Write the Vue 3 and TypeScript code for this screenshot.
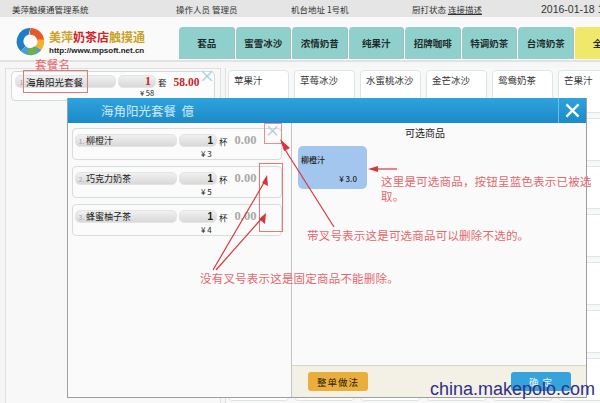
<script setup lang="ts">
const tabs: string[] = ['套品', '蜜雪冰沙', '浓情奶昔', '纯果汁', '招牌咖啡', '特调奶茶', '台湾奶茶', '全部']
const products: string[] = [
  '苹果汁', '草莓冰沙', '水蜜桃冰沙', '金芒冰沙', '鸳鸯奶茶', '芒果汁',
  '', '', '', '', '', '奶香',
  '', '', '', '', '', '奶昔',
  '', '', '', '', '', '果茶',
  '', '', '', '', '', '奶茶',
  '', '', '', '', '', '奶绿',
  '', '', '', '', '', '奶盖',
]
const items = [
  { no: 1, name: '柳橙汁', price: '¥ 3', removable: true },
  { no: 2, name: '巧克力奶茶', price: '¥ 5', removable: false },
  { no: 3, name: '蜂蜜柚子茶', price: '¥ 4', removable: false },
]
</script>

<template>
  <div class="page">
    <header class="status">
      <span class="s1">美萍触摸通管理系统</span>
      <span class="s2">操作人员 管理员</span>
      <span class="s3">机台地址 1号机</span>
      <span class="s4">厨打状态 <u>连接描述</u></span>
      <span class="s5">2016-01-18 16:30</span>
    </header>

    <div class="brand-row">
      <div class="brand">
        <svg class="logo" viewBox="0 0 30 30" width="29" height="29">
          <path d="M15 1 A14 14 0 0 0 5 25 L10 20 A7 7 0 0 1 13 8 Z" fill="#1f7fc4" />
          <path d="M15 1 A14 14 0 0 1 29 14 L22 14 A7 7 0 0 0 14 8 Z" fill="#e8562a" />
          <path d="M29 13 A14 14 0 0 1 25 25 L20 20 A7 7 0 0 0 22 13 Z" fill="#f2b32c" />
          <path d="M26 24 A14 14 0 0 1 5 25 L10 20 A7 7 0 0 0 20 20 Z" fill="#4a9fd0" />
          <path d="M22 26 A14 14 0 0 1 12 29 L13 22 A7 7 0 0 0 19 20 Z" fill="#6cb33f" />
        </svg>
        <div class="brand-text">
          <div class="brand-name"><span class="gold">美萍</span><span class="red">奶茶店</span><span class="gold">触摸通</span></div>
          <div class="brand-url">http://www.mpsoft.net.cn</div>
        </div>
      </div>
      <nav class="tabs">
        <div v-for="(t, i) in tabs" :key="t" class="tab" :class="{ active: i === tabs.length - 1 }">{{ t }}</div>
      </nav>
    </div>

    <main class="main">
      <section class="order">
        <div class="order-card">
          <div class="pill-row">
            <div class="pill name-pill"><i>1</i>海角阳光套餐</div>
            <div class="pill qty-pill"><b>1</b></div>
            <span class="unit">套</span>
            <b class="total">58.00</b>
          </div>
          <div class="order-price">¥ 58</div>
          <span class="close-x">×</span>
        </div>
      </section>
      <section class="products">
        <div v-for="(p, i) in products" :key="i" class="product">{{ p }}</div>
      </section>
    </main>

    <div class="modal">
      <div class="modal-head">
        <span class="modal-title">海角阳光套餐&nbsp;&nbsp;億</span>
        <button class="modal-close">
          <svg viewBox="0 0 16 16" width="15" height="15"><path d="M1.5 1.5 L14.5 14.5 M14.5 1.5 L1.5 14.5" stroke="#fff" stroke-width="2.4" /></svg>
        </button>
      </div>
      <div class="modal-body">
        <div class="left-pane">
          <div v-for="it in items" :key="it.no" class="item">
            <div class="pill-row">
              <div class="pill item-name"><i>{{ it.no }}.</i>{{ it.name }}</div>
              <div class="pill item-qty">1</div>
              <span class="unit">杯</span>
              <b class="zero">0.00</b>
            </div>
            <div class="item-price">{{ it.price }}</div>
            <span v-if="it.removable" class="item-x">×</span>
          </div>
        </div>
        <div class="right-pane">
          <div class="right-main">
            <h3 class="right-title">可选商品</h3>
            <div class="choice">
              <span class="choice-name">柳橙汁</span>
              <span class="choice-price">¥ 3.0</span>
            </div>
          </div>
          <footer class="foot">
            <button class="btn-amber">整单做法</button>
            <button class="btn-blue">确 定</button>
          </footer>
        </div>
      </div>
    </div>

    <!-- annotations laid over the screenshot -->
    <svg class="marks" width="600" height="403" viewBox="0 0 600 403">
      <rect x="23.5" y="70.5" width="64" height="22" fill="none" stroke="#e9777a" />
      <rect x="264.5" y="123.5" width="17" height="20" fill="none" stroke="#ee8b8e" />
      <rect x="259.5" y="163.5" width="23" height="68" fill="none" stroke="#e9777a" />
      <g stroke="#d8363c" stroke-width="1.2" fill="#d8363c">
        <path d="M334 227 L284 148" fill="none" />
        <path d="M280 139 L290 148 L284 151 Z" stroke="none" />
        <path d="M213 270 L265 181" fill="none" />
        <path d="M267 175 L268 186 L262 183 Z" stroke="none" />
        <path d="M216 270 L263 217" fill="none" />
        <path d="M266 213 L265 224 L259 219 Z" stroke="none" />
        <path d="M397 169 L374 169" fill="none" />
        <path d="M368 169 L378 166 L378 172 Z" stroke="none" />
      </g>
    </svg>
    <div class="note n0">套餐名</div>
    <div class="note n1">这里是可选商品，按钮呈蓝色表示已被选<br />取。</div>
    <div class="note n2">带叉号表示这是可选商品可以删除不选的。</div>
    <div class="note n3">没有叉号表示这是固定商品不能删除。</div>
    <div class="watermark">china.makepolo.com</div>
  </div>
</template>

<style>
html, body { margin: 0; background: #f5f5f5; }
</style>

<style scoped>
.page {
  position: relative;
  width: 600px;
  height: 403px;
  overflow: hidden;
  background: #f6f6f6;
  font-family: "Noto Sans CJK SC", "Liberation Sans", sans-serif;
  color: #222;
}
.status {
  display: grid;
  grid-template-columns: 164px 115px 121px 129px 1fr;
  align-items: center;
  height: 17px;
  padding-left: 12px;
  background: #e5e5e5;
  font-size: 8.5px;
  color: #333;
  white-space: nowrap;
}
.s5 { font-size: 10.5px; font-family: "Liberation Sans", sans-serif; }
.brand-row {
  display: flex;
  height: 43px;
  padding-left: 6px;
  background: #fafafa;
  border-bottom: 2px solid #e2e2e2;
}
.brand { flex: none; display: flex; width: 173px; padding: 10px 0 0 10px; box-sizing: border-box; gap: 4px; }
.logo { flex: none; }
.brand-text { display: flex; flex-direction: column; padding-top: 3px; }
.brand-name { font-size: 12px; line-height: 14px; font-weight: 700; white-space: nowrap; }
.gold { color: #c9a227; }
.red { color: #d1262a; }
.brand-url { font-family: "Liberation Sans", sans-serif; font-size: 8px; font-weight: 700; line-height: 12px; margin-top: 1px; color: #222; white-space: nowrap; }
.tabs { flex: none; display: flex; gap: 0.5px; padding-top: 10px; }
.tab {
  flex: none;
  width: 55.5px;
  height: 32px;
  margin-right: 0.5px;
  display: flex;
  align-items: center;
  justify-content: center;
  background: #8fd0cc;
  border-radius: 4px 4px 0 0;
  box-shadow: inset -1px 0 0 #a9bdbb;
  font-size: 9.5px;
  font-weight: 700;
  color: #1d2b2a;
}
.tab.active { background: #f0e86a; }
.main { display: flex; height: 343px; padding: 6px 0 0 5px; box-sizing: border-box; gap: 4px; }
.order { flex: none; width: 216px; padding: 2px 5px; box-sizing: border-box; border: 1px solid #e0e0e0; border-width: 1px 1px 0; background: #f8f8f8; }
.order-card {
  position: relative;
  height: 30px;
  padding: 3px 3px;
  box-sizing: border-box;
  border: 1px solid #cfdcdc;
  border-radius: 4px;
  background: #fcfcfc;
}
.pill-row { display: flex; align-items: center; gap: 2px; }
.pill {
  display: flex;
  align-items: center;
  box-sizing: border-box;
  height: 13px;
  border-radius: 5px;
  background: linear-gradient(#f0f0f0, #d9d9d9);
  border: 1px solid #e4e4e4;
  font-size: 9px;
  color: #222;
  white-space: nowrap;
}
.pill i { font-style: normal; font-size: 7px; color: #aaa; width: 9px; text-align: center; flex: none; }
.name-pill { width: 101px; padding-left: 1px; font-size: 9.5px; }
.qty-pill { width: 38px; justify-content: flex-end; padding-right: 4px; }
.qty-pill b { color: #c8242a; font-family: "Liberation Serif", serif; font-size: 12px; }
.unit { font-size: 8.5px; }
.total { font-family: "Liberation Serif", serif; color: #c8242a; font-size: 11.5px; margin-left: 5px; }
.order-price { font-size: 7.5px; line-height: 9px; margin: 0 0 0 125px; }
.close-x { position: absolute; right: -1px; top: -6px; font-size: 16px; line-height: 18px; color: #9ccbd8; }
.products {
  flex: none;
  width: 375px;
  display: grid;
  grid-template-columns: repeat(6, 61px);
  grid-auto-rows: 43px;
  gap: 5px;
  padding: 2px 0 0 2px;
  border-left: 1px solid #e0e0e0;
  background: #f8f8f8;
}
.product {
  background: #fff;
  border: 1px solid #dbe6e6;
  border-radius: 4px;
  padding: 2px 5px;
  font-size: 9.5px;
  color: #333;
  white-space: nowrap;
  overflow: hidden;
}
.modal {
  position: absolute;
  left: 67px;
  top: 98px;
  width: 520px;
  height: 300px;
  display: flex;
  flex-direction: column;
  box-sizing: border-box;
  background: #fafafa;
  border: 1px solid #9e9e9e;
  border-top: none;
}
.modal-head {
  flex: none;
  height: 25px;
  display: flex;
  align-items: stretch;
  justify-content: space-between;
  background: linear-gradient(#2ea3dc, #1c8ac8);
  color: #cfeaf8;
}
.modal-title { font-size: 12.5px; line-height: 26px; padding-left: 33px; }
.modal-close {
  width: 28px;
  padding: 0;
  display: flex;
  align-items: center;
  justify-content: center;
  background: none;
  border: none;
  border-left: 1px solid #6dbde3;
}
.modal-body { flex: 1; display: flex; min-height: 0; }
.left-pane {
  flex: none;
  width: 224px;
  box-sizing: border-box;
  display: flex;
  flex-direction: column;
  gap: 6px;
  padding: 5px 9px 0 4px;
  border-right: 1px solid #c4c4c4;
}
.item {
  position: relative;
  height: 32px;
  box-sizing: border-box;
  padding: 4px 2px 0;
  border: 1px solid #d5dddd;
  border-radius: 4px;
  background: #fbfbfb;
}
.item-name { width: 102px; padding-left: 1px; }
.item-qty { width: 38px; justify-content: flex-end; padding-right: 3px; font-family: "Liberation Sans", sans-serif; font-weight: 700; font-size: 10px; }
.zero { font-family: "Liberation Serif", serif; font-size: 12.5px; color: #a9a9a9; margin-left: 5px; }
.item-price { font-size: 8px; line-height: 9px; margin: 1px 0 0 126px; }
.item-x { position: absolute; right: 1px; top: -8px; font-size: 15px; line-height: 18px; color: #a6c4d6; }
.right-pane { flex: 1; display: flex; flex-direction: column; min-width: 0; }
.right-main { flex: 1; padding: 0 0 0 6px; }
.right-title { margin: 3px 0 6px; text-align: center; font-size: 10px; line-height: 14px; font-weight: 400; color: #222; padding-right: 34px; }
.choice {
  width: 69px;
  height: 43px;
  box-sizing: border-box;
  padding: 8px 3px 5px 3px;
  display: flex;
  flex-direction: column;
  justify-content: space-between;
  border-radius: 5px;
  background: #a3c6ef;
  font-size: 8px;
  line-height: 11px;
  font-weight: 500;
}
.choice-price { text-align: right; padding-right: 7px; }
.foot {
  flex: none;
  height: 32px;
  box-sizing: border-box;
  display: flex;
  align-items: center;
  justify-content: space-between;
  padding: 0 15px 0 16px;
  background: #f3f0e6;
  border-top: 1px solid #d8d6cb;
}
.btn-amber, .btn-blue {
  height: 19px;
  width: 60px;
  padding: 0;
  border: none;
  border-radius: 3px;
  font-family: inherit;
  font-size: 9.5px;
  letter-spacing: 1px;
}
.btn-amber { background: #e9ae3c; color: #2b2106; }
.btn-blue { background: #36a3dc; color: #e6f5fc; }
.marks { position: absolute; left: 0; top: 0; pointer-events: none; }
.note { position: absolute; color: #e2686d; font-size: 11.5px; line-height: 14px; white-space: nowrap; letter-spacing: 0.2px; }
.n0 { left: 35px; top: 57px; font-size: 11.5px; letter-spacing: 0.3px; }
.n1 { left: 381px; top: 174px; line-height: 15px; }
.n2 { left: 307px; top: 228px; }
.n3 { left: 200px; top: 271px; }
.watermark {
  position: absolute;
  left: 430px;
  top: 376px;
  font-family: "Liberation Sans", sans-serif;
  font-size: 18px;
  line-height: 27px;
  color: #2f3187;
  white-space: nowrap;
}
</style>
